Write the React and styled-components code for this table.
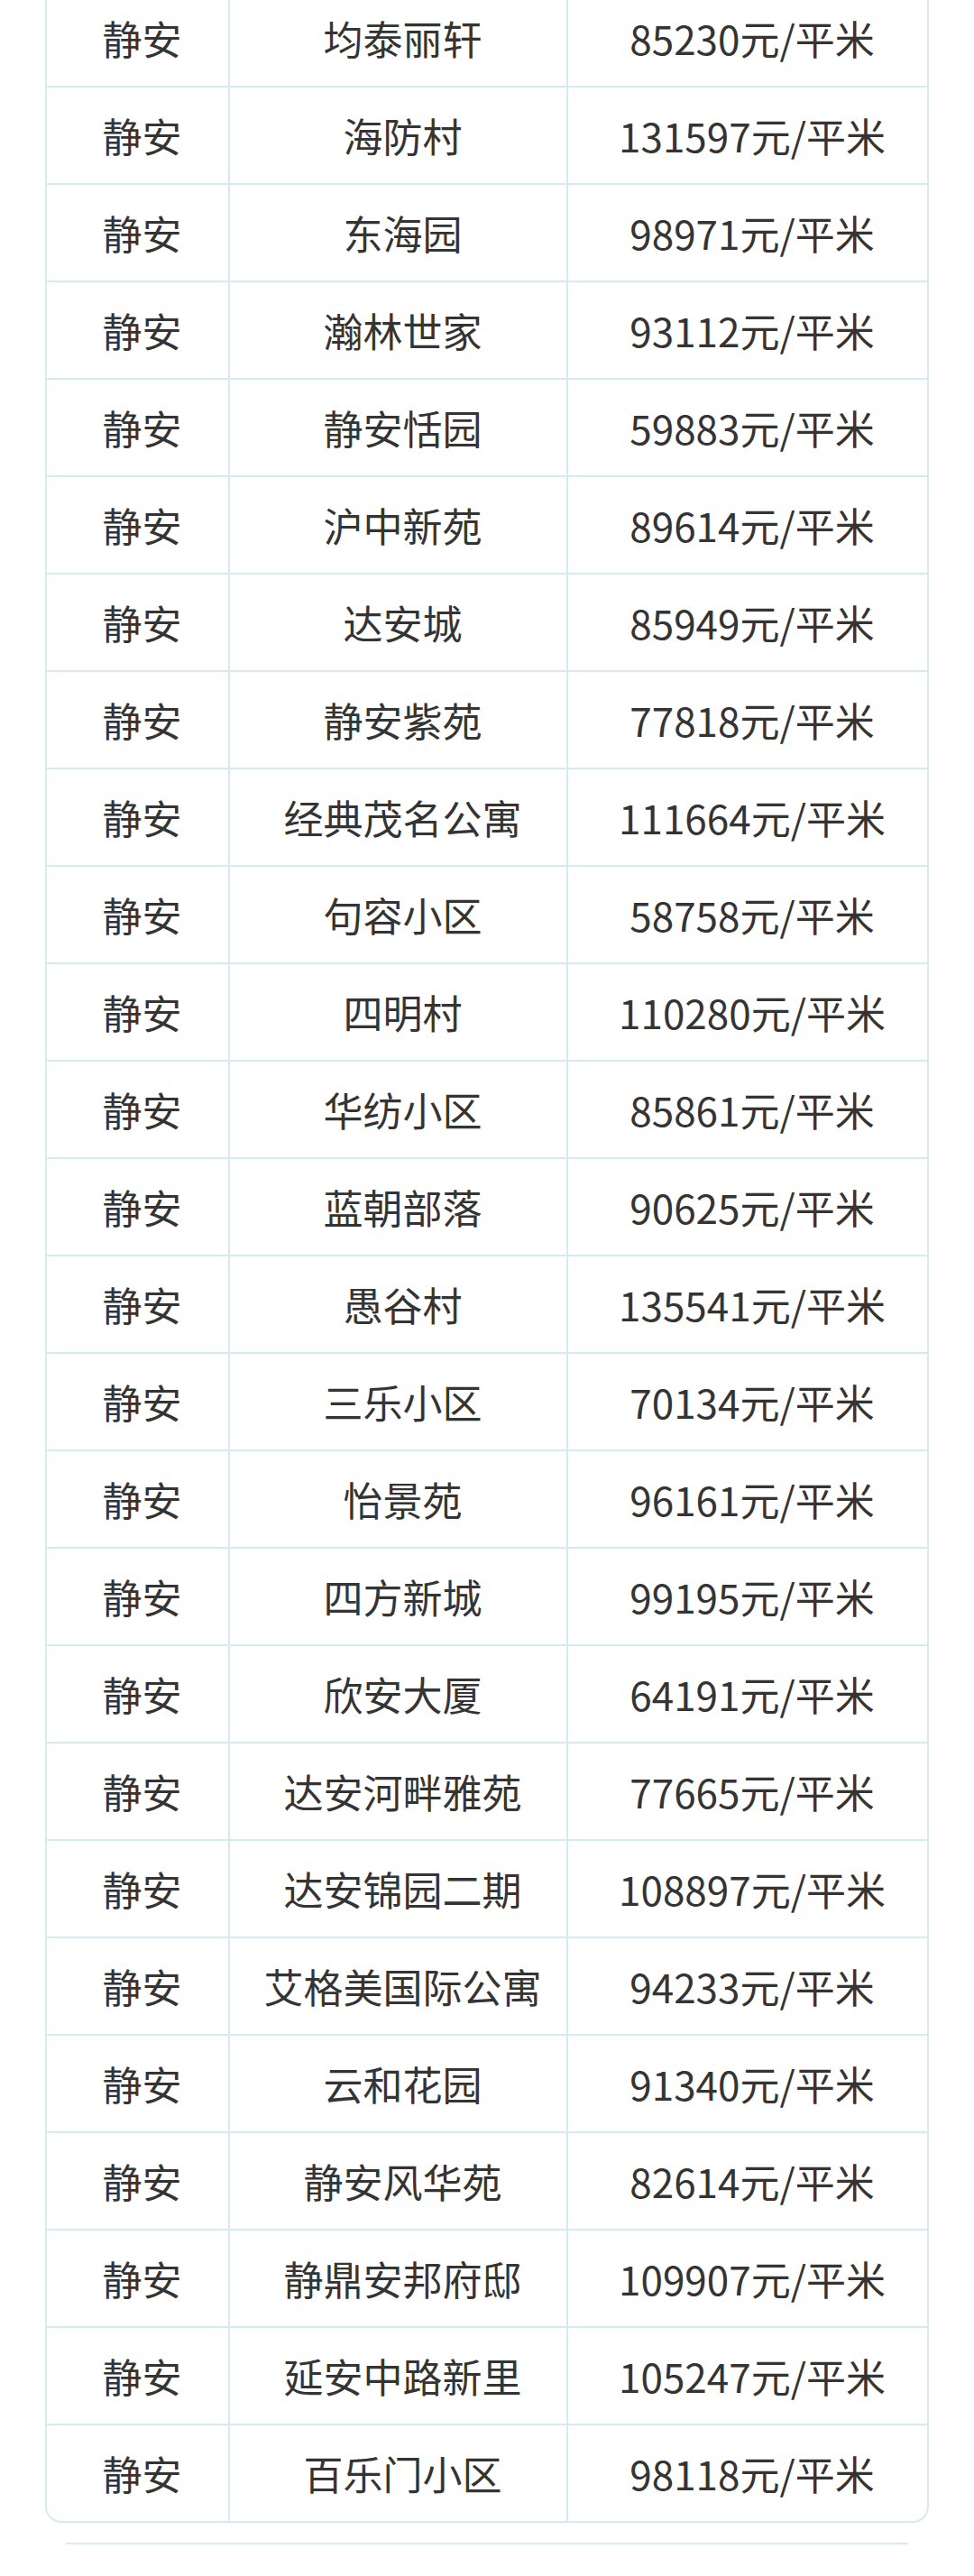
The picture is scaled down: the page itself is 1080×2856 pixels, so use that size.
import React from "react";
import styled, { createGlobalStyle } from "styled-components";

const GlobalStyle = createGlobalStyle`
  html, body {
    margin: 0;
    padding: 0;
    background: #ffffff;
  }
  body {
    font-family: "Noto Sans CJK SC", "Noto Sans", sans-serif;
    color: #333333;
  }
`;

const Page = styled.div`
  width: 1080px;
  min-height: 2856px;
  background: #ffffff;
  overflow: hidden;
`;

const Table = styled.div`
  margin: -11px 50px 0 50px;
  border: 2px solid #d4ecf0;
  border-top: 0;
  border-radius: 0 0 18px 18px;
  overflow: hidden;
`;

const Row = styled.div`
  display: grid;
  grid-template-columns: 201px 375px 1fr;
  height: 106px;
  border-bottom: ${(p) => (p.last ? "0" : "2px solid #d4ecf0")};
`;

const Cell = styled.div`
  display: flex;
  align-items: center;
  justify-content: center;
  padding-left: 10px;
  font-size: 44px;
  line-height: 1;
  color: #343434;
  border-left: ${(p) => (p.first ? "0" : "2px solid #d4ecf0")};
  white-space: nowrap;
`;

const Divider = styled.div`
  margin: 22px 73px 0 73px;
  height: 2px;
  background: #d8ebef;
`;

// 静安区小区均价
const rows = [
  ["均泰丽轩", "85230"],
  ["海防村", "131597"],
  ["东海园", "98971"],
  ["瀚林世家", "93112"],
  ["静安恬园", "59883"],
  ["沪中新苑", "89614"],
  ["达安城", "85949"],
  ["静安紫苑", "77818"],
  ["经典茂名公寓", "111664"],
  ["句容小区", "58758"],
  ["四明村", "110280"],
  ["华纺小区", "85861"],
  ["蓝朝部落", "90625"],
  ["愚谷村", "135541"],
  ["三乐小区", "70134"],
  ["怡景苑", "96161"],
  ["四方新城", "99195"],
  ["欣安大厦", "64191"],
  ["达安河畔雅苑", "77665"],
  ["达安锦园二期", "108897"],
  ["艾格美国际公寓", "94233"],
  ["云和花园", "91340"],
  ["静安风华苑", "82614"],
  ["静鼎安邦府邸", "109907"],
  ["延安中路新里", "105247"],
  ["百乐门小区", "98118"],
];

function App() {
  return (
    <>
      <GlobalStyle />
      <Page>
        <Table>
          {rows.map(([name, price], i) => (
            <Row key={name} last={i === rows.length - 1}>
              <Cell first>静安</Cell>
              <Cell>{name}</Cell>
              <Cell>{price}元/平米</Cell>
            </Row>
          ))}
        </Table>
        <Divider />
      </Page>
    </>
  );
}

export default App;
